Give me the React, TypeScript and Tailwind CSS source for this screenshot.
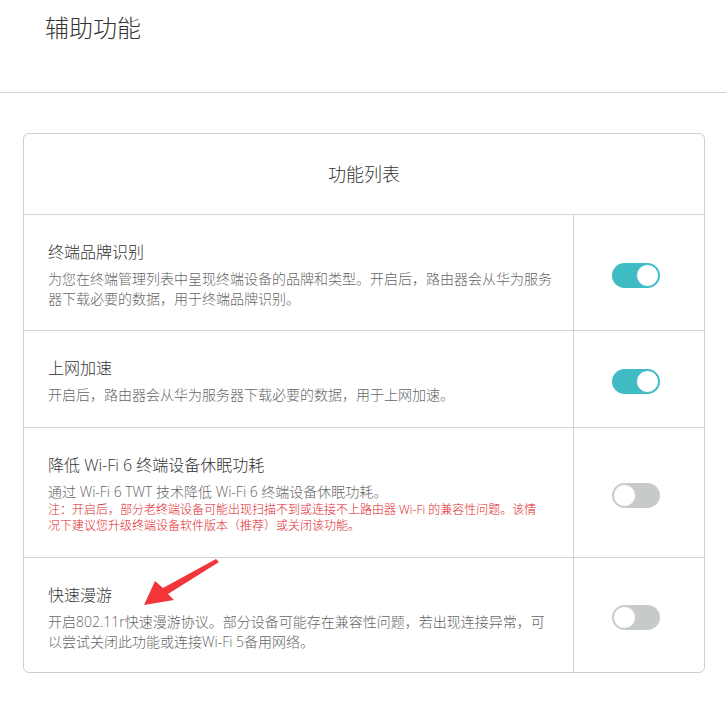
import React from "react";

const FONT = { fontFamily: '"Open Sans", "Noto Sans CJK SC", sans-serif' };

function Toggle({ on }: { on: boolean }) {
  return on ? (
    <div className="relative h-[25px] w-[48px] rounded-full bg-[#3fbbc3]">
      <div className="absolute right-[1px] top-[1px] h-[23px] w-[23px] rounded-full border-[1.5px] border-[#3fbbc3] bg-white" />
    </div>
  ) : (
    <div className="relative h-[25px] w-[48px] rounded-full bg-[#c7cacb]">
      <div className="absolute left-[1px] top-[1px] h-[23px] w-[23px] rounded-full border-[1.5px] border-[#c7cacb] bg-white" />
    </div>
  );
}

function Row({
  h,
  title,
  desc,
  note,
  on,
  last,
}: {
  h: string;
  title: string;
  desc: React.ReactNode;
  note?: React.ReactNode;
  on: boolean;
  last?: boolean;
}) {
  return (
    <div className={`flex ${h} ${last ? "" : "border-b border-[#d2d2d2]"}`}>
      <div className="w-[550px] border-r border-[#d2d2d2] pl-[24px] pt-[25px]">
        <div className="whitespace-nowrap text-[16px] font-light leading-[24px] text-[#333333]">{title}</div>
        <div className="mt-[5px] whitespace-nowrap text-[14px] font-light leading-[20px] text-[#666666]">{desc}</div>
        {note && (
          <div className="whitespace-nowrap text-[12px] font-light leading-[16px] text-[#e0252a]">{note}</div>
        )}
      </div>
      <div className="flex flex-1 items-center pl-[38px] pt-[5px]">
        <Toggle on={on} />
      </div>
    </div>
  );
}

export default function App() {
  return (
    <div className="relative h-[707px] w-[726px] overflow-hidden bg-white" style={FONT}>
      <div className="h-[93px] border-b border-[#d4d4d4] pl-[45px] pt-[12px]">
        <div className="text-[24px] font-light leading-[32px] text-[#333333]">辅助功能</div>
      </div>
      <div className="ml-[23px] mt-[40px] w-[682px] rounded-[6px] border border-[#cfcfcf]">
        <div className="flex h-[81px] items-center justify-center border-b border-[#d2d2d2] text-[18px] font-light text-[#333333]">
          功能列表
        </div>
        <Row
          h="h-[116px]"
          title="终端品牌识别"
          desc={
            <>
              为您在终端管理列表中呈现终端设备的品牌和类型。开启后，路由器会从华为服务
              <br />
              器下载必要的数据，用于终端品牌识别。
            </>
          }
          on
        />
        <Row
          h="h-[97px]"
          title="上网加速"
          desc="开启后，路由器会从华为服务器下载必要的数据，用于上网加速。"
          on
        />
        <Row
          h="h-[130px]"
          title="降低 Wi-Fi 6 终端设备休眠功耗"
          desc="通过 Wi-Fi 6 TWT 技术降低 Wi-Fi 6 终端设备休眠功耗。"
          note={
            <>
              注：开启后，部分老终端设备可能出现扫描不到或连接不上路由器 Wi-Fi 的兼容性问题。该情
              <br />
              况下建议您升级终端设备软件版本（推荐）或关闭该功能。
            </>
          }
          on={false}
        />
        <Row
          h="h-[114px]"
          title="快速漫游"
          desc={
            <>
              开启802.11r快速漫游协议。部分设备可能存在兼容性问题，若出现连接异常，可
              <br />
              以尝试关闭此功能或连接Wi-Fi 5备用网络。
            </>
          }
          on={false}
          last
        />
      </div>
      <svg className="pointer-events-none absolute left-0 top-0" width="726" height="707">
        <polygon
          points="216,559 219,562 168,594 174,600 144,605 155,581 163,588"
          fill="#f2353a"
        />
      </svg>
    </div>
  );
}
